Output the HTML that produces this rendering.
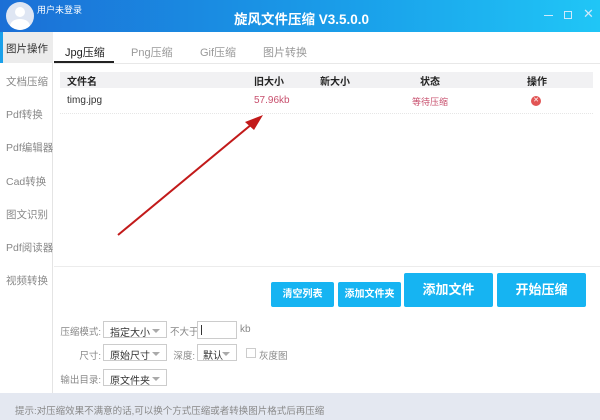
<!DOCTYPE html>
<html><head><meta charset="utf-8"><style>
*{margin:0;padding:0;box-sizing:border-box}
body{width:600px;height:420px;position:relative;overflow:hidden;background:#fff;font-family:"Liberation Sans","Noto Sans CJK SC",sans-serif;font-size:10px;color:#333}
.a{position:absolute}
.title{left:0;top:0;width:600px;height:32px;background:linear-gradient(90deg,#1b6fd6,#1aa0ea 60%,#20c6f6)}
.side div{position:absolute;left:0;width:53px;text-align:left;padding-left:6px;color:#888;font-size:10.5px;white-space:nowrap}
.btn{background:#16b4f2;color:#fff;font-weight:bold;text-align:center;border-radius:2px}
.sel{border:1px solid #ccc;background:#fff;height:17px;font-size:10px;padding:2px 0 0 6px;color:#333}
.sel:after{content:"";position:absolute;right:6px;top:7px;border:4px solid transparent;border-top:4px solid #aaa}
.lab{color:#888;font-size:10px;white-space:nowrap}
.r{text-align:right}
</style></head><body>
<div class="a title"></div>
<div class="a" style="left:6px;top:2px;width:28px;height:28px;border-radius:50%;background:#dfe6f3;overflow:hidden"><div class="a" style="left:9px;top:5px;width:10px;height:10px;border-radius:50%;background:#fff"></div><div class="a" style="left:4px;top:17px;width:20px;height:14px;border-radius:50%;background:#fff"></div></div>
<div class="a" style="left:37px;top:3px;color:#fff;font-size:9px">用户未登录</div>
<div class="a" style="left:234px;top:8px;color:#fff;font-size:13.5px;font-weight:bold">旋风文件压缩 V3.5.0.0</div>
<div class="a" style="left:544px;top:15px;width:9px;height:1px;background:#cfe9fb"></div>
<div class="a" style="left:564px;top:11px;width:8px;height:8px;border:1px solid #cfe9fb"></div>
<div class="a" style="left:583px;top:6px;color:#cfe9fb;font-size:13px">✕</div>
<div class="a side" style="left:0;top:32px;width:53px;height:361px;border-right:1px solid #e4e4e4">
<div style="top:0;height:31px;background:#ececec;border-left:3px solid #1aa0ea;padding-left:3px;padding-top:9px;color:#333">图片操作</div>
<div style="top:42px">文档压缩</div><div style="top:75px">Pdf转换</div><div style="top:108px">Pdf编辑器</div><div style="top:142px">Cad转换</div><div style="top:175px">图文识别</div><div style="top:208px">Pdf阅读器</div><div style="top:241px">视频转换</div>
</div>
<div class="a" style="left:54px;top:63px;width:546px;height:1px;background:#e8e8e8"></div>
<div class="a" style="left:65px;top:44px;font-size:11px;color:#222">Jpg压缩</div>
<div class="a" style="left:54px;top:61px;width:60px;height:2px;background:#222"></div>
<div class="a" style="left:131px;top:44px;font-size:11px;color:#999">Png压缩</div>
<div class="a" style="left:200px;top:44px;font-size:11px;color:#999">Gif压缩</div>
<div class="a" style="left:263px;top:44px;font-size:11px;color:#999">图片转换</div>
<div class="a" style="left:60px;top:72px;width:533px;height:16px;background:#f1f1f3"></div>
<div class="a" style="left:67px;top:73px;font-weight:bold;color:#222">文件名</div>
<div class="a" style="left:254px;top:73px;font-weight:bold;color:#222">旧大小</div>
<div class="a" style="left:320px;top:73px;font-weight:bold;color:#222">新大小</div>
<div class="a" style="left:420px;top:73px;font-weight:bold;color:#222">状态</div>
<div class="a" style="left:527px;top:73px;font-weight:bold;color:#222">操作</div>
<div class="a" style="left:67px;top:95px;color:#333">timg.jpg</div>
<div class="a" style="left:254px;top:95px;color:#c8506e">57.96kb</div>
<div class="a" style="left:412px;top:95px;color:#c8506e;font-size:9px">等待压缩</div>
<div class="a" style="left:531px;top:96px;width:10px;height:10px;border-radius:50%;background:#e25555;color:#fff;font-size:7px;text-align:center;line-height:10px">✕</div>
<div class="a" style="left:60px;top:113px;width:533px;border-top:1px dotted #e6e6e6"></div>
<svg class="a" style="left:0;top:0" width="600" height="420"><line x1="118" y1="235" x2="252" y2="124" stroke="#c21a1a" stroke-width="2"/><polygon points="263,115 245,122 254,130" fill="#c21a1a"/></svg>
<div class="a" style="left:54px;top:266px;width:546px;height:1px;background:#ececec"></div>
<div class="a btn" style="left:271px;top:282px;width:63px;height:25px;line-height:25px;font-size:10px">清空列表</div>
<div class="a btn" style="left:338px;top:282px;width:63px;height:25px;line-height:25px;font-size:10px">添加文件夹</div>
<div class="a btn" style="left:404px;top:273px;width:89px;height:34px;line-height:34px;font-size:13px">添加文件</div>
<div class="a btn" style="left:497px;top:273px;width:89px;height:34px;line-height:34px;font-size:13px">开始压缩</div>
<div class="a lab r" style="left:40px;width:61px;top:324px;font-size:9.5px">压缩模式:</div>
<div class="a sel" style="left:103px;top:321px;width:64px">指定大小</div>
<div class="a lab" style="left:170px;top:324px;font-size:9.5px">不大于</div>
<div class="a" style="left:197px;top:321px;width:40px;height:18px;border:1px solid #ccc"><div class="a" style="left:3px;top:3px;width:1px;height:10px;background:#333"></div></div>
<div class="a lab" style="left:240px;top:324px">kb</div>
<div class="a lab r" style="left:60px;width:41px;top:348px;font-size:9.5px">尺寸:</div>
<div class="a sel" style="left:103px;top:344px;width:64px">原始尺寸</div>
<div class="a lab r" style="left:170px;width:25px;top:348px;font-size:9.5px">深度:</div>
<div class="a sel" style="left:197px;top:344px;width:40px;padding-left:5px">默认</div>
<div class="a" style="left:246px;top:348px;width:10px;height:10px;border:1px solid #ccc"></div>
<div class="a lab" style="left:259px;top:348px;font-size:9.5px">灰度图</div>
<div class="a lab r" style="left:40px;width:61px;top:372px;font-size:9.5px">输出目录:</div>
<div class="a sel" style="left:103px;top:369px;width:64px">原文件夹</div>
<div class="a" style="left:0;top:393px;width:600px;height:27px;background:#e4e8f1"></div>
<div class="a" style="left:15px;top:403px;color:#888;font-size:9.5px">提示:对压缩效果不满意的话,可以换个方式压缩或者转换图片格式后再压缩</div>
</body></html>
